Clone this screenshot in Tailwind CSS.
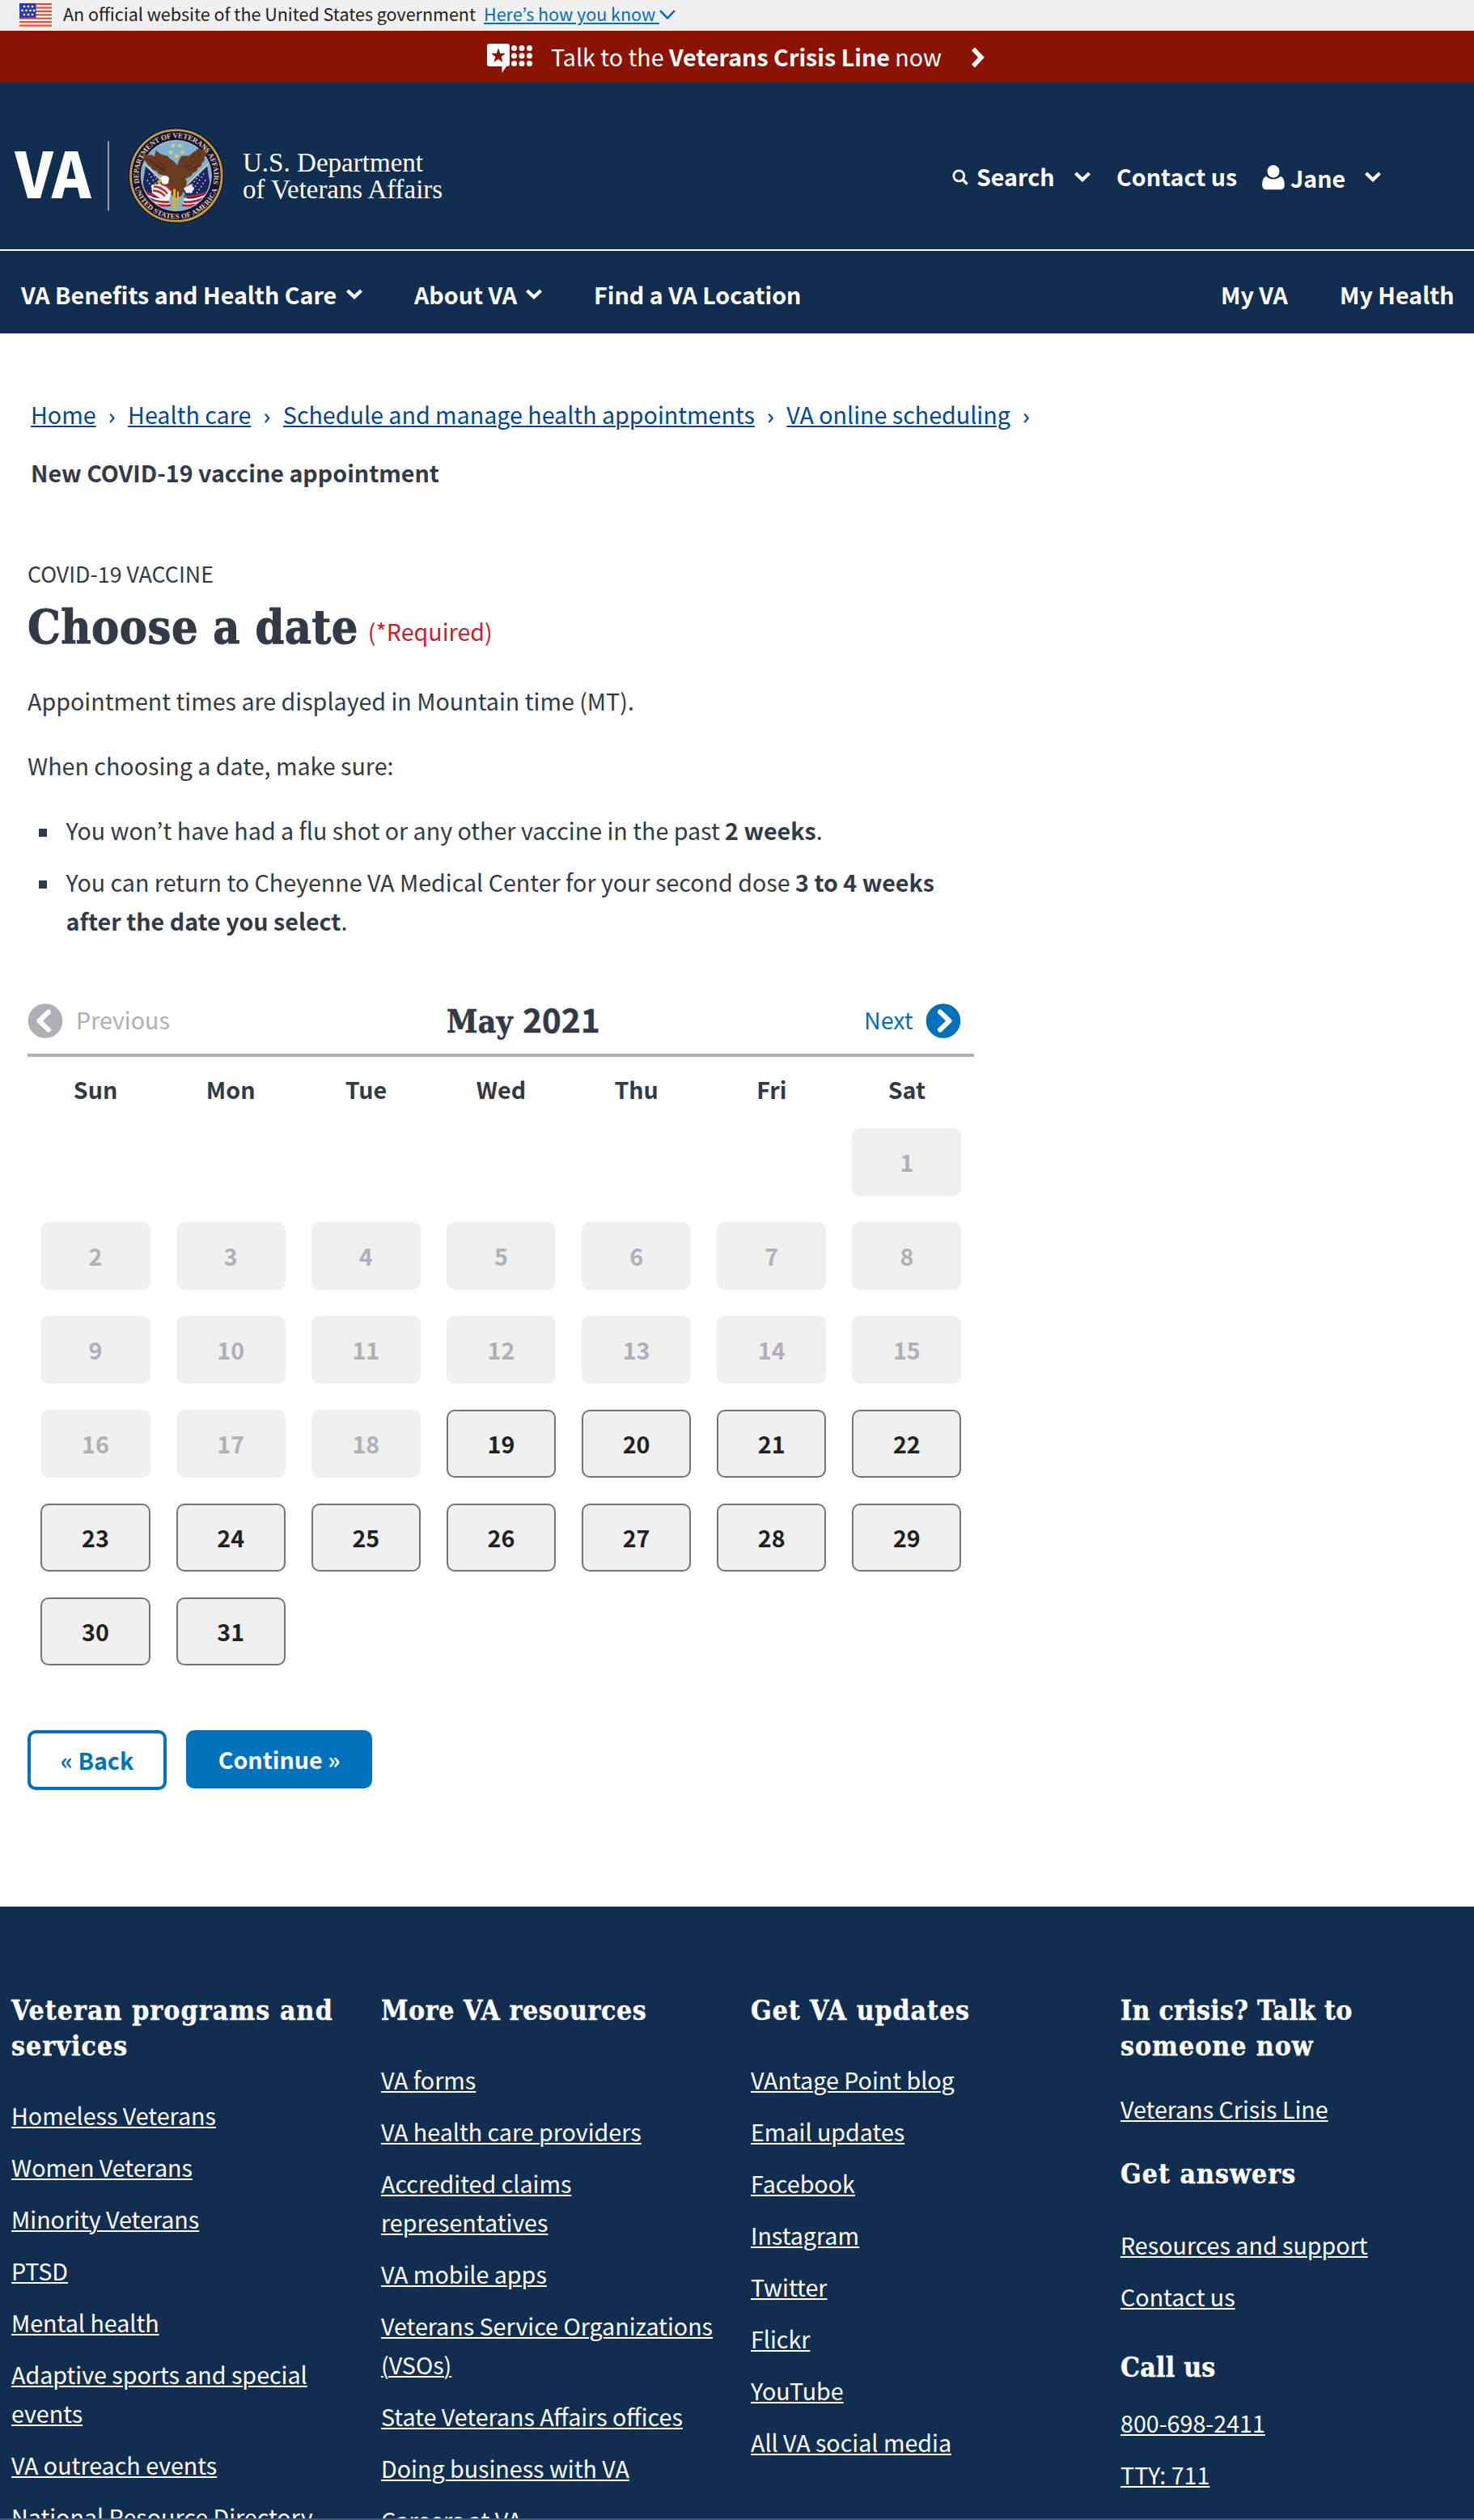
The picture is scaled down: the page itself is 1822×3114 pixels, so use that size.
<!DOCTYPE html>
<html lang="en">
<head>
<meta charset="utf-8">
<title>Choose a date | Veterans Affairs</title>
<script src="https://cdn.jsdelivr.net/npm/@tailwindcss/browser@4"></script>
</head>
<body class="h-[3114px] overflow-hidden bg-white font-['Noto_Sans_CJK_KR','Noto_Sans',sans-serif] text-[28.650px] leading-[48px] text-[#323a45] relative">

<!-- Government banner -->
<div class="flex h-[38px] items-start bg-[#f0f0f0] pl-6 text-[21.5px] leading-[34px] text-[#212121]">
  <svg class="mt-1 h-[29px] w-10 shrink-0" viewBox="0 0 40 29">
    <rect width="40" height="29" fill="#fff"/>
    <g fill="#e0533d"><rect width="40" height="2.3"/><rect y="4.4" width="40" height="2.3"/><rect y="8.8" width="40" height="2.3"/><rect y="13.2" width="40" height="2.3"/><rect y="17.6" width="40" height="2.3"/><rect y="22" width="40" height="2.3"/><rect y="26.4" width="40" height="2.3"/></g>
    <rect width="20.5" height="18" fill="#2a3bb5"/>
    <g fill="#fff"><circle cx="6" cy="4" r="1.3"/><circle cx="11" cy="4" r="1.3"/><circle cx="16" cy="4" r="1.3"/><circle cx="3.5" cy="9" r="1.3"/><circle cx="8.5" cy="9" r="1.3"/><circle cx="13.5" cy="9" r="1.3"/><circle cx="18" cy="9" r="1.3"/><circle cx="6" cy="14" r="1.3"/><circle cx="11" cy="14" r="1.3"/><circle cx="16" cy="14" r="1.3"/></g>
  </svg>
  <span class="ml-3.5 w-[520px] whitespace-nowrap">An official website of the United States government</span>
  <a class="whitespace-pre text-[#0071bb] underline decoration-2 underline-offset-2">Here’s how you know </a>
  <svg class="mt-3 h-3 w-5" viewBox="0 0 20 12" fill="none" stroke="#0071bb" stroke-width="2.6"><path d="M1 1.2l9 9.2 9-9.2"/></svg>
</div>

<!-- Crisis line -->
<div class="flex h-16 items-start bg-[#8b1303] pl-[602px] leading-[64px] text-white">
  <svg class="mt-4 h-9 w-14 shrink-0" viewBox="0 0 56 36" fill="#fff">
    <path d="M3 0h22a3 3 0 013 3v22a3 3 0 01-3 3h-1l-5.500 8V28H3a3 3 0 01-3-3V3a3 3 0 013-3z"/>
    <path fill="#8b1303" d="M14 5.500l2.300 6.400h6.500l-5.200 4.100 1.900 6.900-5.500-4-5.500 4 1.900-6.900-5.200-4.100h6.500z"/>
    <circle cx="33.500" cy="5.500" r="3.500"/><circle cx="43" cy="5.500" r="3.500"/><circle cx="52.500" cy="5.500" r="3.500"/>
    <circle cx="33.500" cy="15" r="3.500"/><circle cx="43" cy="15" r="3.500"/><circle cx="52.500" cy="15" r="3.500"/>
    <circle cx="33.500" cy="24.500" r="3.500"/><circle cx="43" cy="24.500" r="3.500"/><circle cx="52.500" cy="24.500" r="3.500"/>
  </svg>
  <span class="ml-[23px] w-[519px] whitespace-nowrap">Talk to the <b>Veterans Crisis Line</b> now</span>
  <svg class="mt-5 h-[26px] w-[18px]" viewBox="0 0 18 26" fill="none" stroke="#fff" stroke-width="5.500"><path d="M3 2.500L13 13 3 23.500"/></svg>
</div>

<!-- Header -->
<header class="flex h-[208px] border-b-2 border-white bg-[#112e51] text-white">
  <svg class="h-[206px] w-[560px] shrink-0" viewBox="0 101.500 560 206">
    <defs>
      <path id="arcTop" d="M172.300 226A46.500 46.500 0 11263.300 226"/>
      <path id="arcBottom" d="M166.300 231A53.500 53.500 0 00269.300 231"/>
      <clipPath id="disc"><circle cx="217.800" cy="216.500" r="42.500"/></clipPath>
    </defs>
    <text x="18.500" y="244" font-family="Noto Sans CJK KR" font-weight="900" font-size="78.500" textLength="94" lengthAdjust="spacingAndGlyphs" fill="#fff">VA</text>
    <rect x="133" y="174" width="2" height="86" fill="#8a99ae"/>
    <circle cx="217.800" cy="216.500" r="59" fill="#14123f"/>
    <circle cx="217.800" cy="216.500" r="56.300" fill="none" stroke="#dcb43c" stroke-width="2.600"/>
    <circle cx="217.800" cy="216.500" r="56.300" fill="none" stroke="#8a6420" stroke-width="1" stroke-dasharray="1.500 1.500"/>
    <circle cx="217.800" cy="216.500" r="43.500" fill="#7fb2d0" stroke="#c9c7a0" stroke-width="1"/>
    <g clip-path="url(#disc)">
      <path fill="#1d2560" d="M180 205l30 29-6 12-20 0-8-16zM256 205l-30 29 6 12 20 0 8-16z"/>
      <g stroke="#d8dbe8" stroke-width="1.500" stroke-dasharray="1.500 3"><path d="M184 214l16 24M182 222l12 18M190 216l12 16M252 214l-16 24M254 222l-12 18M246 216l-12 16"/></g>
      <g fill="none" stroke-width="2.600"><path stroke="#fff" d="M177 238q14 10 32 8M180 245q14 8 30 6M259 238q-14 10-32 8M256 245q-14 8-30 6"/><path stroke="#b3262e" d="M175 235q16 8 34 7M179 241.500q14 9 30 7.500M184 249q12 6 27 4M261 235q-16 8-34 7M257 241.500q-14 9-30 7.500M252 249q-12 6-27 4"/></g>
      <path stroke="#e5dcb0" stroke-width="1.200" d="M179 202l36 36M257 202l-36 36"/>
    </g>
    <path fill="#6b3c20" d="M193 185c-3 6 0 12-6 6l-13 0c2 6 5 8 8 9-3 1 2 5 5 6-1 2 4 5 7 5 0 3 5 5 8 5l4 6c-6 1-6 8-4 12l8 4 6 6 8-2 4-8c4-6 3-10 1-14 8-2 9-5 9-7 4 0 7-4 6-6 5-1 6-4 5-6 4-2 5-5 3-7 5-3 5-10 2-15-4 4-3 3-4 7l-5-3c-4 4-8 5-11 9l-9 0c-3 3-5 8-6 12-3-6-10-8-12-12-6 0-12-4-14-7z"/>
    <path fill="none" stroke="#3f2110" stroke-width="1" d="M181 195c6 5 14 9 22 14M188 191c5 8 12 10 18 17M191 204l15 8M248 188c-4 9-12 14-20 20M240 190c-4 7-8 11-12 15M247 202c-6 5-10 6-16 8"/>
    <path fill="#fff" d="M198 220c2-4 9-5 11 0l-1 6c-3 2-6 1-7 1z"/>
    <path fill="#e6b02e" d="M198 220l-4 4 2 3 4-3zM214 233h3v26l-3-3zM219 236h2v16l-2 3z"/>
    <path fill="#f1f1ef" d="M187 228l14-2 11 10-3 12-12-4-9-6z"/>
    <path fill="none" stroke="#bf2a32" stroke-width="2.300" d="M190 230q10 0 17 9M189 235q9 0 15 7M199 227q9 2 12 8"/>
    <path fill="#e9edf2" d="M227 232l9-5 4 5-3 6-7 0z"/>
    <path fill="#f0cf4d" d="M214 176l1 2.300h2.400l-1.900 1.500.7 2.400-2.200-1.400-2.200 1.400.7-2.400-1.900-1.500h2.400zM222.500 176l1 2.300h2.400l-1.900 1.500.7 2.400-2.200-1.400-2.200 1.400.7-2.400-1.900-1.500h2.400zM211 184.500l1 2.300h2.400l-1.900 1.500.7 2.400-2.200-1.400-2.200 1.400.7-2.400-1.900-1.500h2.400zM225.500 184.500l1 2.300h2.400l-1.900 1.500.7 2.400-2.200-1.400-2.200 1.400.7-2.400-1.900-1.500h2.400zM218.200 189l1 2.300h2.400l-1.900 1.500.7 2.400-2.200-1.400-2.200 1.400.7-2.400-1.900-1.500h2.400z"/>
    <g fill="#e3d08a" font-family="Liberation Serif" font-weight="700" font-size="9">
      <text textLength="166" lengthAdjust="spacing"><textPath href="#arcTop">DEPARTMENT OF VETERANS AFFAIRS</textPath></text>
      <text textLength="136" lengthAdjust="spacing"><textPath href="#arcBottom">UNITED STATES OF AMERICA</textPath></text>
    </g>
    <g fill="#fff" font-family="Liberation Serif" font-size="34.500">
      <text x="300" y="211" textLength="223" lengthAdjust="spacingAndGlyphs">U.S. Department</text>
      <text x="300" y="244" textLength="247" lengthAdjust="spacingAndGlyphs">of Veterans Affairs</text>
    </g>
  </svg>
  <div class="flex items-start pl-[617px] pt-[91.5px] font-bold">
    <div class="flex w-[203px] items-start">
      <svg class="mt-[15px] h-5 w-5" viewBox="0 0 20 20" fill="none" stroke="#fff" stroke-width="2.800"><circle cx="8.300" cy="8.300" r="6.500"/><path stroke-width="3.400" d="M13 13l5.500 5.500"/></svg>
      <span class="ml-2.5 w-[121px]">Search</span>
      <svg class="mt-[18px] h-[13px] w-5" viewBox="0 0 20 13" fill="none" stroke="#fff" stroke-width="4.200"><path d="M1.500 2l8.500 8 8.500-8"/></svg>
    </div>
    <span class="w-[180px] whitespace-nowrap">Contact us</span>
    <div class="flex items-start">
      <svg class="mt-[10px] h-[31px] w-7" viewBox="0 0 28 31" fill="#fff"><ellipse cx="14" cy="7.800" rx="7.500" ry="7.800"/><path d="M5.500 14c4 4.500 13 4.500 17 0 4.200.5 5.300 6 5.300 10.500 0 3.500-1.800 5.800-5 5.800H5.200c-3.200 0-5-2.300-5-5.800C.2 20 1.300 14.500 5.500 14z"/></svg>
      <span class="ml-[7px] mt-0.5 w-[92px]">Jane</span>
      <svg class="mt-[18px] h-[13px] w-5" viewBox="0 0 20 13" fill="none" stroke="#fff" stroke-width="4.200"><path d="M1.500 2l8.500 8 8.500-8"/></svg>
    </div>
  </div>
</header>

<!-- Main navigation -->
<nav class="flex h-[102px] items-start whitespace-nowrap bg-[#112e51] pl-[26px] pt-[29.5px] font-bold text-white">
  <div class="flex w-[486px]"><span class="w-[402px]">VA Benefits and Health Care</span><svg class="mt-[17px] h-[13px] w-5" viewBox="0 0 20 13" fill="none" stroke="#fff" stroke-width="4.200"><path d="M1.500 2l8.500 8 8.500-8"/></svg></div>
  <div class="flex w-[222px]"><span class="w-[138px]">About VA</span><svg class="mt-[17px] h-[13px] w-5" viewBox="0 0 20 13" fill="none" stroke="#fff" stroke-width="4.200"><path d="M1.500 2l8.500 8 8.500-8"/></svg></div>
  <span class="w-[775px]">Find a VA Location</span>
  <span class="w-[147px]">My VA</span>
  <span>My Health</span>
</nav>

<main class="px-[34px] pt-[75.5px]">
  <div class="flex items-baseline whitespace-nowrap pl-1 text-[#004795]">
    <a class="underline decoration-2 underline-offset-2">Home</a><span class="w-[39.500px] text-center font-['Noto_Sans'] text-[28px] leading-[0px]">›</span>
    <a class="underline decoration-2 underline-offset-2">Health care</a><span class="w-[39.500px] text-center font-['Noto_Sans'] text-[28px] leading-[0px]">›</span>
    <a class="underline decoration-2 underline-offset-2">Schedule and manage health appointments</a><span class="w-[39.500px] text-center font-['Noto_Sans'] text-[28px] leading-[0px]">›</span>
    <a class="underline decoration-2 underline-offset-2">VA online scheduling</a><span class="w-[39.500px] text-center font-['Noto_Sans'] text-[28px] leading-[0px]">›</span>
  </div>
  <div class="mt-6 pl-1 font-bold">New COVID-19 vaccine appointment</div>

  <div class="mt-[81px] text-[26.800px] leading-10">COVID-19 VACCINE</div>
  <div class="mt-2.5 flex h-[74px] items-baseline">
    <h1 class="whitespace-nowrap font-['DejaVu_Serif_Condensed','DejaVu_Serif',serif] text-[57px] font-bold leading-[72px] tracking-[0.500px] [-webkit-text-stroke:1px]">Choose a date</h1>
    <span class="relative -top-[3px] ml-3 leading-[48px] text-[#cd2026]">(*Required)</span>
  </div>
  <p class="mt-[29px]">Appointment times are displayed in Mountain time (MT).</p>
  <p class="mt-8">When choosing a date, make sure:</p>
  <ul class="mt-8 flex flex-col gap-4">
    <li class="flex"><i class="ml-3.5 mr-[23.500px] mt-[22.500px] size-2.5 shrink-0 bg-[#323a45]"></i><span>You won’t have had a flu shot or any other vaccine in the past <b>2 weeks</b>.</span></li>
    <li class="flex"><i class="ml-3.5 mr-[23.500px] mt-[22.500px] size-2.5 shrink-0 bg-[#323a45]"></i><span>You can return to Cheyenne VA Medical Center for your second dose <b>3 to 4 weeks<br>after the date you select</b>.</span></li>
  </ul>

  <!-- Calendar -->
  <section class="mt-[74px] w-[1170px]">
    <div class="flex h-[70.500px] items-start border-b-4 border-[#aeb0b5]">
      <div class="flex w-[518px] items-start text-[#aeb0b5]">
        <svg class="mt-[4.500px] h-[43px] w-11" viewBox="0 0 44 43"><circle cx="22" cy="21.500" r="21.300" fill="#aeb0b5"/><path d="M26 10.500L14.500 21.500 26 32.500" fill="none" stroke="#fff" stroke-width="6" stroke-linecap="round" stroke-linejoin="round"/></svg>
        <span class="ml-4">Previous</span>
      </div>
      <h2 class="mt-[3.500px] w-[516px] whitespace-nowrap font-['DejaVu_Serif_Condensed','DejaVu_Serif',serif] text-[38.500px] font-bold tracking-[0.300px] [-webkit-text-stroke:0.600px]">May <span class="font-['Noto_Sans_CJK_KR'] text-[40px] leading-[0px]">2021</span></h2>
      <div class="flex items-start text-[#0071bb]">
        <span class="w-[76px]">Next</span>
        <svg class="mt-[4.500px] h-[43px] w-11" viewBox="0 0 44 43"><circle cx="22" cy="21.500" r="21.300" fill="#0071bb"/><path d="M18 10.500L29.500 21.500 18 32.500" fill="none" stroke="#fff" stroke-width="6" stroke-linecap="round" stroke-linejoin="round"/></svg>
      </div>
    </div>
    <div class="mt-[15.500px] grid grid-cols-7 gap-x-8 pl-[16.500px] pr-[15.500px] text-center font-bold">
      <span>Sun</span><span>Mon</span><span>Tue</span><span>Wed</span><span>Thu</span><span>Fri</span><span>Sat</span>
    </div>
    <div id="days" class="mt-[24.500px] grid grid-cols-7 gap-8 pl-[16.450px] pr-[15.550px] text-center font-bold"></div>
  </section>

  <div class="mt-20 flex items-start gap-6 font-bold">
    <button class="h-[74px] w-[172px] rounded-[10px] border-4 border-[#0071bb] leading-[64px] text-[#0071bb]">« Back</button>
    <button class="h-[72px] w-[230px] rounded-[10px] bg-[#0071bb] leading-[72px] text-white">Continue »</button>
  </div>
</main>

<footer class="mt-36 grid h-[900px] grid-cols-[457px_457px_457px_437px] bg-[#112e51] pl-3.5 pt-[107px] text-white">
  <div class="w-[428px]">
    <h2 class="mb-[38.500px] whitespace-nowrap font-['DejaVu_Serif_Condensed','DejaVu_Serif',serif] text-[33.500px] font-bold leading-[44px] tracking-[1.100px] [-webkit-text-stroke:0.400px]">Veteran programs and<br>services</h2>
    <ul class="flex flex-col gap-4 underline decoration-2 underline-offset-2">
      <li>Homeless Veterans</li><li>Women Veterans</li><li>Minority Veterans</li><li>PTSD</li><li>Mental health</li><li>Adaptive sports and special<br>events</li><li>VA outreach events</li><li>National Resource Directory</li>
    </ul>
  </div>
  <div class="w-[428px]">
    <h2 class="mb-[38.500px] whitespace-nowrap font-['DejaVu_Serif_Condensed','DejaVu_Serif',serif] text-[33.500px] font-bold leading-[44px] tracking-[0.600px] [-webkit-text-stroke:0.400px]">More VA resources</h2>
    <ul class="flex flex-col gap-4 underline decoration-2 underline-offset-2">
      <li>VA forms</li><li>VA health care providers</li><li>Accredited claims<br>representatives</li><li>VA mobile apps</li><li>Veterans Service Organizations<br>(VSOs)</li><li>State Veterans Affairs offices</li><li>Doing business with VA</li><li>Careers at VA</li>
    </ul>
  </div>
  <div class="w-[428px]">
    <h2 class="mb-[38.500px] whitespace-nowrap font-['DejaVu_Serif_Condensed','DejaVu_Serif',serif] text-[33.500px] font-bold leading-[44px] tracking-[0.950px] [-webkit-text-stroke:0.400px]">Get VA updates</h2>
    <ul class="flex flex-col gap-4 underline decoration-2 underline-offset-2">
      <li>VAntage Point blog</li><li>Email updates</li><li>Facebook</li><li>Instagram</li><li>Twitter</li><li>Flickr</li><li>YouTube</li><li>All VA social media</li>
    </ul>
  </div>
  <div class="w-[428px]">
    <h2 class="mb-[31px] whitespace-nowrap font-['DejaVu_Serif_Condensed','DejaVu_Serif',serif] text-[33.500px] font-bold leading-[44px] tracking-[0.300px] [-webkit-text-stroke:0.400px]">In crisis? Talk to<br><span class="tracking-[1px]">someone now</span></h2>
    <ul class="underline decoration-2 underline-offset-2"><li>Veterans Crisis Line</li></ul>
    <h2 class="mb-[41px] mt-[35px] font-['DejaVu_Serif_Condensed','DejaVu_Serif',serif] text-[33.500px] font-bold leading-[44px] tracking-[1.050px] [-webkit-text-stroke:0.400px]">Get answers</h2>
    <ul class="flex flex-col gap-4 underline decoration-2 underline-offset-2"><li>Resources and support</li><li>Contact us</li></ul>
    <h2 class="mb-[22.500px] mt-[41.500px] font-['DejaVu_Serif_Condensed','DejaVu_Serif',serif] text-[33.500px] font-bold leading-[44px] tracking-[0.250px] [-webkit-text-stroke:0.400px]">Call us</h2>
    <ul class="flex flex-col gap-4 underline decoration-2 underline-offset-2"><li>800-698-2411</li><li>TTY: 711</li></ul>
  </div>
</footer>
<div class="absolute inset-x-0 top-[3112px] h-0.5 bg-[#3d5370]"></div>

<script>
  // May 2021 starts on a Saturday; dates before the 19th are unavailable.
  const days = document.getElementById('days');
  for (let d = 1; d <= 31; d++) {
    const b = document.createElement('button');
    b.textContent = d;
    b.className = 'h-[84px] rounded-[10px] bg-[#f0f0f0] ' + (d === 1 ? 'col-start-7 ' : '') +
      (d < 19 ? 'leading-[84px] text-[#aeb0b5]' : 'border-2 border-[#757575] leading-[80px] text-[#212121]');
    days.appendChild(b);
  }
</script>
</body>
</html>
